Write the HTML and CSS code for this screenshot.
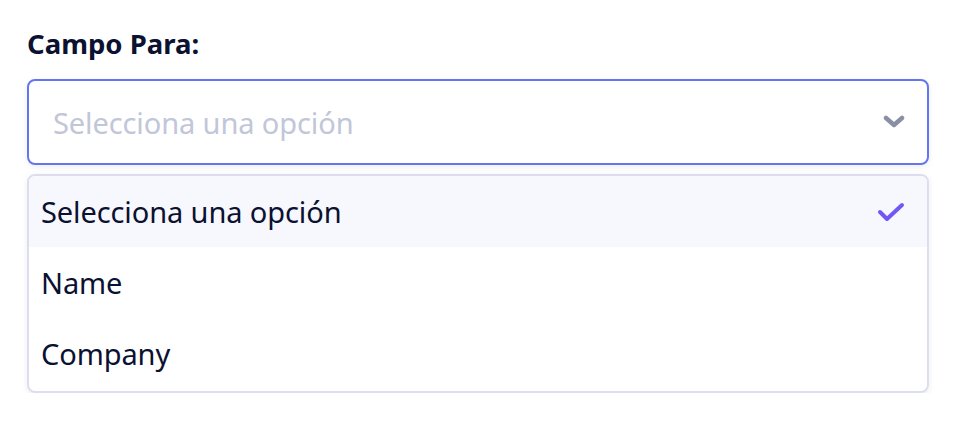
FILE: index.html
```html
<!DOCTYPE html>
<html lang="es">
<head>
  <meta charset="UTF-8">
  <meta name="viewport" content="width=device-width, initial-scale=1.0">
  <title>Campo Para</title>
  <link rel="stylesheet" href="styles.css">
</head>
<body>
  <div class="field">
    <label class="field-label" for="campo">Campo Para:</label>

    <div class="select" id="campo">
      <span class="select-placeholder">Selecciona una opción</span>
      <svg class="select-chevron" width="22" height="14" viewBox="0 0 22 14">
        <path d="M3 3 L11 10 L19 3" fill="none" stroke="#8a8fa6" stroke-width="4.5" stroke-linecap="round" stroke-linejoin="round"/>
      </svg>
    </div>

    <ul class="options">
      <li class="option selected">
        <span>Selecciona una opción</span>
        <svg class="option-check" width="28" height="22" viewBox="0 0 28 22">
          <path d="M3 11 L10 18 L25 4" fill="none" stroke="#7357f6" stroke-width="4" stroke-linecap="round" stroke-linejoin="round"/>
        </svg>
      </li>
      <li class="option"><span>Name</span></li>
      <li class="option"><span>Company</span></li>
    </ul>
  </div>
</body>
</html>
```

FILE: styles.css
```css
body {
  margin: 0;
  background: #fff;
  font-family: "Noto Sans", "Open Sans", sans-serif;
  color: #0b1130;
}
.field {
  padding: 25px 25px 0 27px;
}
.field-label {
  display: block;
  font-size: 27.5px;
  font-weight: bold;
  line-height: 38px;
  margin-bottom: 16px;
}
.select {
  display: flex;
  align-items: center;
  justify-content: space-between;
  height: 82px;
  padding: 0 22px 0 24px;
  border: 2px solid #6674f0;
  border-radius: 8px;
  box-shadow: 0 2px 6px rgba(30, 40, 90, 0.08);
}
.select-placeholder {
  font-size: 29px;
  color: #c1c6d9;
  letter-spacing: -0.1px;
}
.select-chevron {
  display: block;
}
.options {
  list-style: none;
  margin: 9px 0 0;
  padding: 0 0 2px;
  border: 2px solid #dcdeed;
  border-radius: 8px;
  overflow: hidden;
  box-shadow: 0 2px 6px rgba(30, 40, 90, 0.08);
}
.option {
  display: flex;
  align-items: center;
  justify-content: space-between;
  height: 71px;
  padding: 0 22px 0 12px;
  font-size: 29px;
  letter-spacing: -0.1px;
}
.option.selected {
  background: #f7f8fd;
}
.option-check {
  display: block;
}
```
